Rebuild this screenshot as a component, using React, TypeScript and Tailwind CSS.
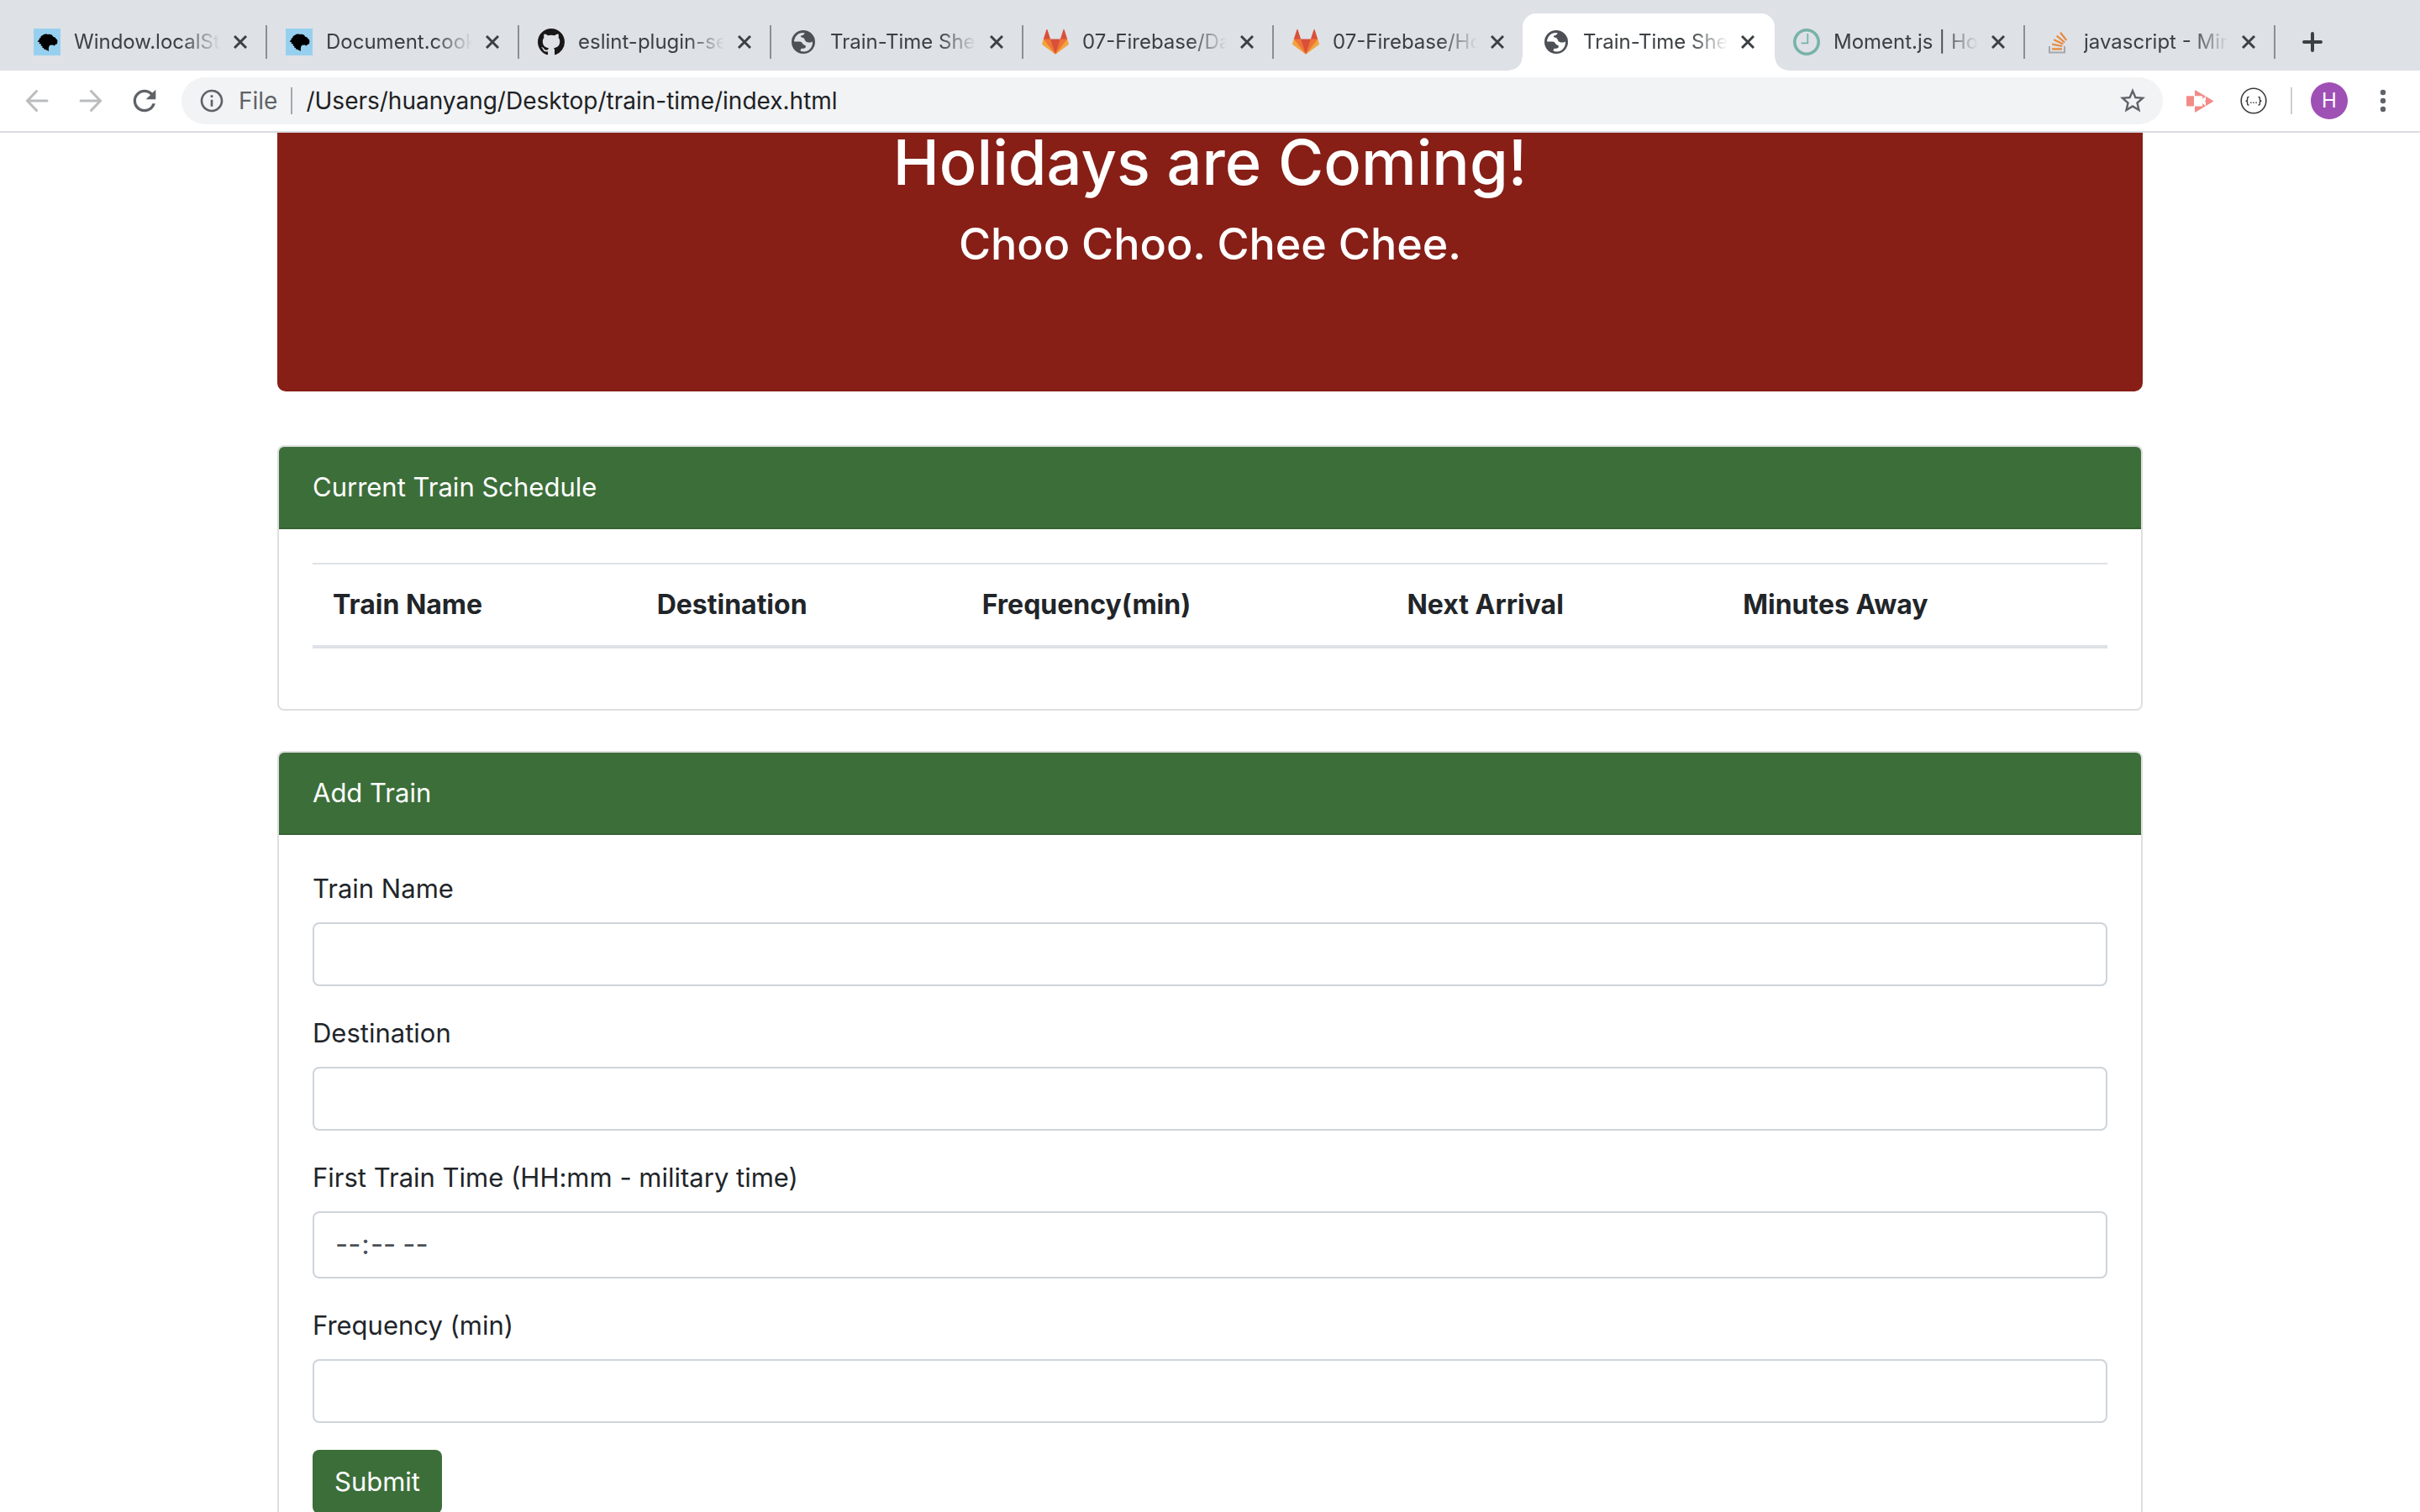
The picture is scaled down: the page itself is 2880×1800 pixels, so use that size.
import React from 'react';

function MdnIcon() {
  return (
    <svg viewBox="0 0 32 32" className="size-8 shrink-0" aria-hidden="true">
      <rect width="32" height="32" fill="#97d0ee" />
      <path
        d="M4.600 15.500L6.800 13L6.600 12L8.600 10.400L8.600 9.200L11 7.800C12.600 6.600 15 6.200 16.600 6.900L18 6.700C20.600 6.500 22.600 7.800 23.200 9.800C24.800 10 26.200 11 27 12.400L28 13.200C28.600 14.800 28.500 16.600 27.800 18.400L26 18.700L25 20.400L22.600 19.400L19.400 19.800C18 21.400 17.600 23.400 18 27C16.600 26.200 14.600 25.800 13.400 24.600L12.600 25L11.800 23L10 22.600L10.600 21L8.400 20.200L9.200 18.600L6.400 18L7.400 16.400Z"
        fill="#000"
      />
    </svg>
  );
}

function GithubIcon() {
  return (
    <svg viewBox="0 0 16 16" className="size-8 shrink-0" fill="#191717" aria-hidden="true">
      <path d="M8 0C3.58 0 0 3.58 0 8c0 3.54 2.29 6.53 5.47 7.59.4.07.55-.17.55-.38 0-.19-.01-.82-.01-1.49-2.01.37-2.53-.49-2.69-.94-.09-.23-.48-.94-.82-1.13-.28-.15-.68-.52-.01-.53.63-.01 1.08.58 1.23.82.72 1.21 1.87.87 2.33.66.07-.52.28-.87.51-1.07-1.78-.2-3.64-.89-3.64-3.95 0-.87.31-1.59.82-2.15-.08-.2-.36-1.02.08-2.12 0 0 .67-.21 2.2.82.64-.18 1.32-.27 2-.27.68 0 1.36.09 2 .27 1.53-1.04 2.2-.82 2.2-.82.44 1.1.16 1.92.08 2.12.51.56.82 1.27.82 2.15 0 3.07-1.87 3.75-3.65 3.95.29.25.54.73.54 1.48 0 1.07-.01 1.93-.01 2.2 0 .21.15.46.55.38A8.013 8.013 0 0016 8c0-4.42-3.58-8-8-8z" />
    </svg>
  );
}

function GlobeIcon() {
  return (
    <svg viewBox="0 0 32 32" className="size-8 shrink-0" fill="#4d5156" aria-hidden="true">
      <path
        fillRule="evenodd"
        d="M16 2a14 14 0 1 0 0 28a14 14 0 1 0 0-28zM5 15.4C5.2 11.4 8.4 6 13.3 5.3L17.5 5C17.4 7 15.8 8 14 8.3C12.4 8.8 12.6 10 14 10.4C16 11 17 11 17.4 12.6C18 14.6 19.4 16.4 21.6 16.4C23 16.4 24.6 17.2 27 15.6C27.2 19.6 26 22.2 24 24.2C22 26.4 19.4 27.4 16.7 27.4C15.2 27.4 14 27.2 12.7 26.8C12.6 25 13 24 14.4 23.8C17 23.6 18.9 23.4 18.9 21.4C19 19.2 16.6 20 15.4 18.2C14.2 16 13.4 15.4 11.3 15.4Z"
      />
    </svg>
  );
}

function GitlabIcon() {
  return (
    <svg viewBox="0 0 36 36" className="size-8 shrink-0" aria-hidden="true">
      <path fill="#d8503a" d="M2 14l9.38 9v-9l-4-12.28c-.205-.632-1.176-.632-1.38 0z" />
      <path fill="#d8503a" d="M34 14l-9.38 9v-9l4-12.28c.205-.632 1.176-.632 1.38 0z" />
      <path fill="#d8503a" d="M18 34.38L3 14h30z" />
      <path fill="#ee7536" d="M18 34.38L11.38 14H2l4 11z" />
      <path fill="#ee7536" d="M18 34.38L24.62 14H34l-4 11z" />
      <path fill="#f3a43f" d="M2 14L.1 20.16c-.18.565 0 1.2.5 1.56l17.42 12.66z" />
      <path fill="#f3a43f" d="M34 14l1.9 6.16c.18.565 0 1.2-.5 1.56L18 34.38z" />
    </svg>
  );
}

function MomentIcon() {
  return (
    <svg viewBox="0 0 32 32" className="size-8 shrink-0" fill="none" stroke="#77b3a9" aria-hidden="true">
      <circle cx="16" cy="16" r="14.2" strokeWidth="3.6" />
      <path d="M17.3 6v11.4H9.6" strokeWidth="1.8" />
    </svg>
  );
}

function StackOverflowIcon() {
  return (
    <svg viewBox="0 0 32 32" className="size-8 shrink-0" fill="none" aria-hidden="true">
      <path d="M7 21v7.4h18V21" stroke="#a4a7ab" strokeWidth="2" />
      <path
        d="M10 24.4h12M10.2 18.6l12 2.4M12.3 13.3l11 5.2M15.7 8.7l9.4 7.8M20 4.7l7.2 9.2"
        stroke="#e8893c"
        strokeWidth="2.2"
      />
    </svg>
  );
}

type Tab = { title: string; icon: () => React.ReactElement; grow: string; active?: boolean; divider?: boolean };

const tabs: Tab[] = [
  { title: 'Window.localSt', icon: MdnIcon, grow: 'grow-[150]', divider: true },
  { title: 'Document.cook', icon: MdnIcon, grow: 'grow-[150]', divider: true },
  { title: 'eslint-plugin-se', icon: GithubIcon, grow: 'grow-[150]', divider: true },
  { title: 'Train-Time She', icon: GlobeIcon, grow: 'grow-[150]', divider: true },
  { title: '07-Firebase/Da', icon: GitlabIcon, grow: 'grow-[149]', divider: true },
  { title: '07-Firebase/Ho', icon: GitlabIcon, grow: 'grow-[149]' },
  { title: 'Train-Time She', icon: GlobeIcon, grow: 'grow-[149]', active: true },
  { title: 'Moment.js | Ho', icon: MomentIcon, grow: 'grow-[149]', divider: true },
  { title: 'javascript - Min', icon: StackOverflowIcon, grow: 'grow-[149]', divider: true },
];

function BrowserTab({ title, icon: Icon, grow, active, divider }: Tab) {
  return (
    <div className={`relative flex min-w-0 basis-0 items-center ${grow} ${active ? '-ml-0.5 rounded-t-2xl bg-white pl-0.5' : ''}`}>
      {active && (
        <>
          <span className="absolute bottom-0 -left-4 size-4 bg-[radial-gradient(circle_at_0_0,transparent_15px,white_16px)]" />
          <span className="absolute -right-4 bottom-0 size-4 bg-[radial-gradient(circle_at_100%_0,transparent_15px,white_16px)]" />
        </>
      )}
      <button type="button" className="flex min-w-0 flex-1 items-center gap-4 pl-[22px]">
        <Icon />
        <span className="min-w-0 flex-1 overflow-hidden text-left text-2xl whitespace-nowrap [mask-image:linear-gradient(to_right,black_74%,transparent)]">
          {title}
        </span>
      </button>
      <button type="button" aria-label={`Close ${title}`} className="flex h-12 w-12 shrink-0 items-center justify-center">
        <svg viewBox="0 0 16 16" className="size-4" stroke="#3c4043" strokeWidth="3" aria-hidden="true">
          <path d="M1 1l14 14M15 1L1 15" />
        </svg>
      </button>
      <span className={`ml-1.5 h-10 w-0.5 shrink-0 ${divider ? 'bg-[#8b8e93]' : ''}`} />
    </div>
  );
}

function NavButton({ label, children }: { label: string; children: React.ReactNode }) {
  return (
    <button type="button" aria-label={label} className="flex h-14 w-16 shrink-0 items-center justify-center">
      {children}
    </button>
  );
}

function Toolbar() {
  return (
    <div className="flex items-center border-b-2 border-[#dadce0] bg-white px-3 py-2">
      <NavButton label="Back">
        <svg viewBox="0 0 28 28" className="size-7" fill="none" stroke="#babcbe" strokeWidth="3" strokeLinecap="round" aria-hidden="true">
          <path d="M26 14H3M13.5 2.5L2.5 14L13.5 25.5" />
        </svg>
      </NavButton>
      <NavButton label="Forward">
        <svg viewBox="0 0 28 28" className="size-7" fill="none" stroke="#babcbe" strokeWidth="3" strokeLinecap="round" aria-hidden="true">
          <path d="M2 14h23M14.5 2.5L25.5 14L14.5 25.5" />
        </svg>
      </NavButton>
      <NavButton label="Reload">
        <svg viewBox="0 0 24 24" className="size-10" fill="#5f6368" aria-hidden="true">
          <path d="M17.65 6.35A7.96 7.96 0 0 0 12 4c-4.42 0-7.99 3.58-7.99 8s3.57 8 7.99 8c3.73 0 6.84-2.55 7.73-6h-2.08A5.99 5.99 0 0 1 12 18c-3.31 0-6-2.69-6-6s2.69-6 6-6c1.66 0 3.14.69 4.22 1.78L13 11h7V4l-2.35 2.35z" />
        </svg>
      </NavButton>

      <div className="mx-3 flex h-14 min-w-0 flex-1 items-center rounded-full bg-[#f1f3f4] pr-[18px] pl-5">
        <svg viewBox="0 0 24 24" className="size-8 shrink-0" fill="#5f6368" aria-hidden="true">
          <path d="M11 17h2v-6h-2v6zm1-15C6.48 2 2 6.48 2 12s4.48 10 10 10 10-4.48 10-10S17.52 2 12 2zm0 18c-4.41 0-8-3.59-8-8s3.59-8 8-8 8 3.59 8 8-3.59 8-8 8zM11 9h2V7h-2v2z" />
        </svg>
        <label htmlFor="address" className="ml-4 text-[28px] leading-10 text-[#5f6368]">
          File
        </label>
        <span className="mx-4 h-8 w-0.5 shrink-0 bg-[#a5a8ab]" />
        <input
          id="address"
          type="text"
          defaultValue="/Users/huanyang/Desktop/train-time/index.html"
          className="min-w-0 flex-1 bg-transparent text-[28px] leading-10 text-[#202124] outline-none"
        />
        <button type="button" aria-label="Bookmark this page" className="shrink-0">
          <svg viewBox="0 0 24 24" className="size-9" fill="#5f6368" aria-hidden="true">
            <path d="M22 9.24l-7.19-.62L12 2 9.19 8.63 2 9.24l5.46 4.73L5.82 21 12 17.27 18.18 21l-1.63-7.03L22 9.24zM12 15.4l-3.76 2.27 1-4.28-3.32-2.88 4.38-.38L12 6.1l1.71 4.04 4.38.38-3.32 2.88 1 4.28L12 15.4z" />
          </svg>
        </button>
      </div>

      <NavButton label="Screen recorder">
        <svg viewBox="0 0 32 27" className="h-[27px] w-8" fill="#f28b87" aria-hidden="true">
          <rect x="0" y="7.3" width="9" height="12.2" rx="1" />
          <path
            fillRule="evenodd"
            d="M10 .8Q10-.2 11 .4L31.6 12.7Q32.3 13.4 31.6 14.1L11 26.4Q10 27 10 26zM10 7.3V19.5H18.2Q19.2 19.5 19.2 18.5V16L23 19V14.8L22 13.4L23 12V7.8L19.2 10.8V8.3Q19.2 7.3 18.2 7.3z"
          />
        </svg>
      </NavButton>
      <NavButton label="JSON viewer">
        <svg viewBox="0 0 32 32" className="size-8" fill="none" stroke="#3a3a3a" aria-hidden="true">
          <circle cx="16" cy="16" r="14.8" strokeWidth="1.6" />
          <path
            d="M10.5 11.5H9.8Q8.6 11.5 8.6 12.7V14.6Q8.6 16.2 6.6 16.2Q8.6 16.2 8.6 17.8V19.8Q8.6 21 9.8 21H10.5M21.5 11.5H22.2Q23.4 11.5 23.4 12.7V14.6Q23.4 16.2 25.4 16.2Q23.4 16.2 23.4 17.8V19.8Q23.4 21 22.2 21H21.5"
            strokeWidth="1.4"
          />
          <path d="M12.2 18.2h1.4M15.3 18.2h1.4M18.4 18.2h1.4" strokeWidth="1.4" />
        </svg>
      </NavButton>
      <span className="ml-3 h-8 w-0.5 shrink-0 bg-[#cdcfd2]" />
      <button
        type="button"
        aria-label="Profile"
        className="ml-[22px] flex size-11 shrink-0 items-center justify-center rounded-full bg-[#9f50b5] text-2xl text-white"
      >
        H
      </button>
      <span className="w-2.5 shrink-0" />
      <NavButton label="Menu">
        <svg viewBox="0 0 8 28" className="h-7 w-2" fill="#5f6368" aria-hidden="true">
          <circle cx="4" cy="4" r="3.2" />
          <circle cx="4" cy="14" r="3.2" />
          <circle cx="4" cy="24" r="3.2" />
        </svg>
      </NavButton>
    </div>
  );
}

function Card({ title, children }: { title: string; children: React.ReactNode }) {
  return (
    <section className="rounded-lg border-2 border-[#dfdfdf] bg-white">
      <h5 className="rounded-t-md border-b-2 border-[#356232] bg-[#3c6e39] px-10 py-6 text-[31px] leading-[48px] text-white">
        {title}
      </h5>
      <div className="p-10">{children}</div>
    </section>
  );
}

const columns = ['Train Name', 'Destination', 'Frequency(min)', 'Next Arrival', 'Minutes Away'];

const fields = [
  { id: 'train-name', label: 'Train Name', type: 'text', size: 'h-[76px] text-[31px]' },
  { id: 'destination', label: 'Destination', type: 'text', size: 'h-[76px] text-[31px]' },
  { id: 'first-train', label: 'First Train Time (HH:mm - military time)', type: 'time', size: 'h-20 text-[33px]' },
  { id: 'frequency', label: 'Frequency (min)', type: 'text', size: 'h-[76px] text-[31px]' },
];

export default function App() {
  return (
    <div className="flex h-screen flex-col overflow-hidden bg-white font-['Inter','Liberation_Sans',sans-serif] text-[#212529]">
      <header className="shrink-0">
        <div className="flex bg-[#dee1e6] pt-4 pl-[18px] text-[#3c4043]">
          <nav aria-label="Tabs" className="flex h-[68px] min-w-0 flex-1">
            {tabs.map((tab, i) => (
              <BrowserTab key={i} {...tab} />
            ))}
          </nav>
          <button type="button" aria-label="New tab" className="mr-[84px] flex w-[88px] items-center justify-center">
            <svg viewBox="0 0 24 24" className="size-6" stroke="#3c4043" strokeWidth="4" strokeLinecap="round" aria-hidden="true">
              <path d="M12 2v20M2 12h20" />
            </svg>
          </button>
        </div>
        <Toolbar />
      </header>

      <main className="min-h-0 flex-1 overflow-hidden">
        <div className="mx-auto w-full max-w-[2220px]">
          <div className="rounded-b-[10px] bg-[#871f17] pb-36 text-center font-medium text-white">
            <h1 className="text-[74px] leading-[70px]">Holidays are Coming!</h1>
            <h3 className="mt-8 text-[52px] leading-[62px]">Choo Choo. Chee Chee.</h3>
          </div>

          <div className="mt-16 flex flex-col gap-12">
            <Card title="Current Train Schedule">
              <table className="mb-8 w-full border-collapse text-left">
                <thead>
                  <tr className="border-t-2 border-b-4 border-[#dee2e6]">
                    {columns.map((column) => (
                      <th key={column} scope="col" className="px-6 py-6 text-[32px] leading-[48px] font-bold">
                        {column}
                      </th>
                    ))}
                  </tr>
                </thead>
                <tbody />
              </table>
            </Card>

            <Card title="Add Train">
              <form className="flex flex-col items-start gap-8" onSubmit={(event) => event.preventDefault()}>
                {fields.map(({ id, label, type, size }) => (
                  <div key={id} className="flex w-full flex-col gap-4">
                    <label htmlFor={id} className="text-[31px] leading-[48px]">
                      {label}
                    </label>
                    <input
                      id={id}
                      type={type}
                      className={`w-full rounded-lg border-2 border-[#ced4da] bg-white px-6 text-[#495057] outline-none [&::-webkit-calendar-picker-indicator]:hidden ${size}`}
                    />
                  </div>
                ))}
                <button type="submit" className="h-[76px] rounded-lg bg-[#3c6e39] px-[26px] text-[31px] text-white">
                  Submit
                </button>
              </form>
            </Card>
          </div>
        </div>
      </main>
    </div>
  );
}
